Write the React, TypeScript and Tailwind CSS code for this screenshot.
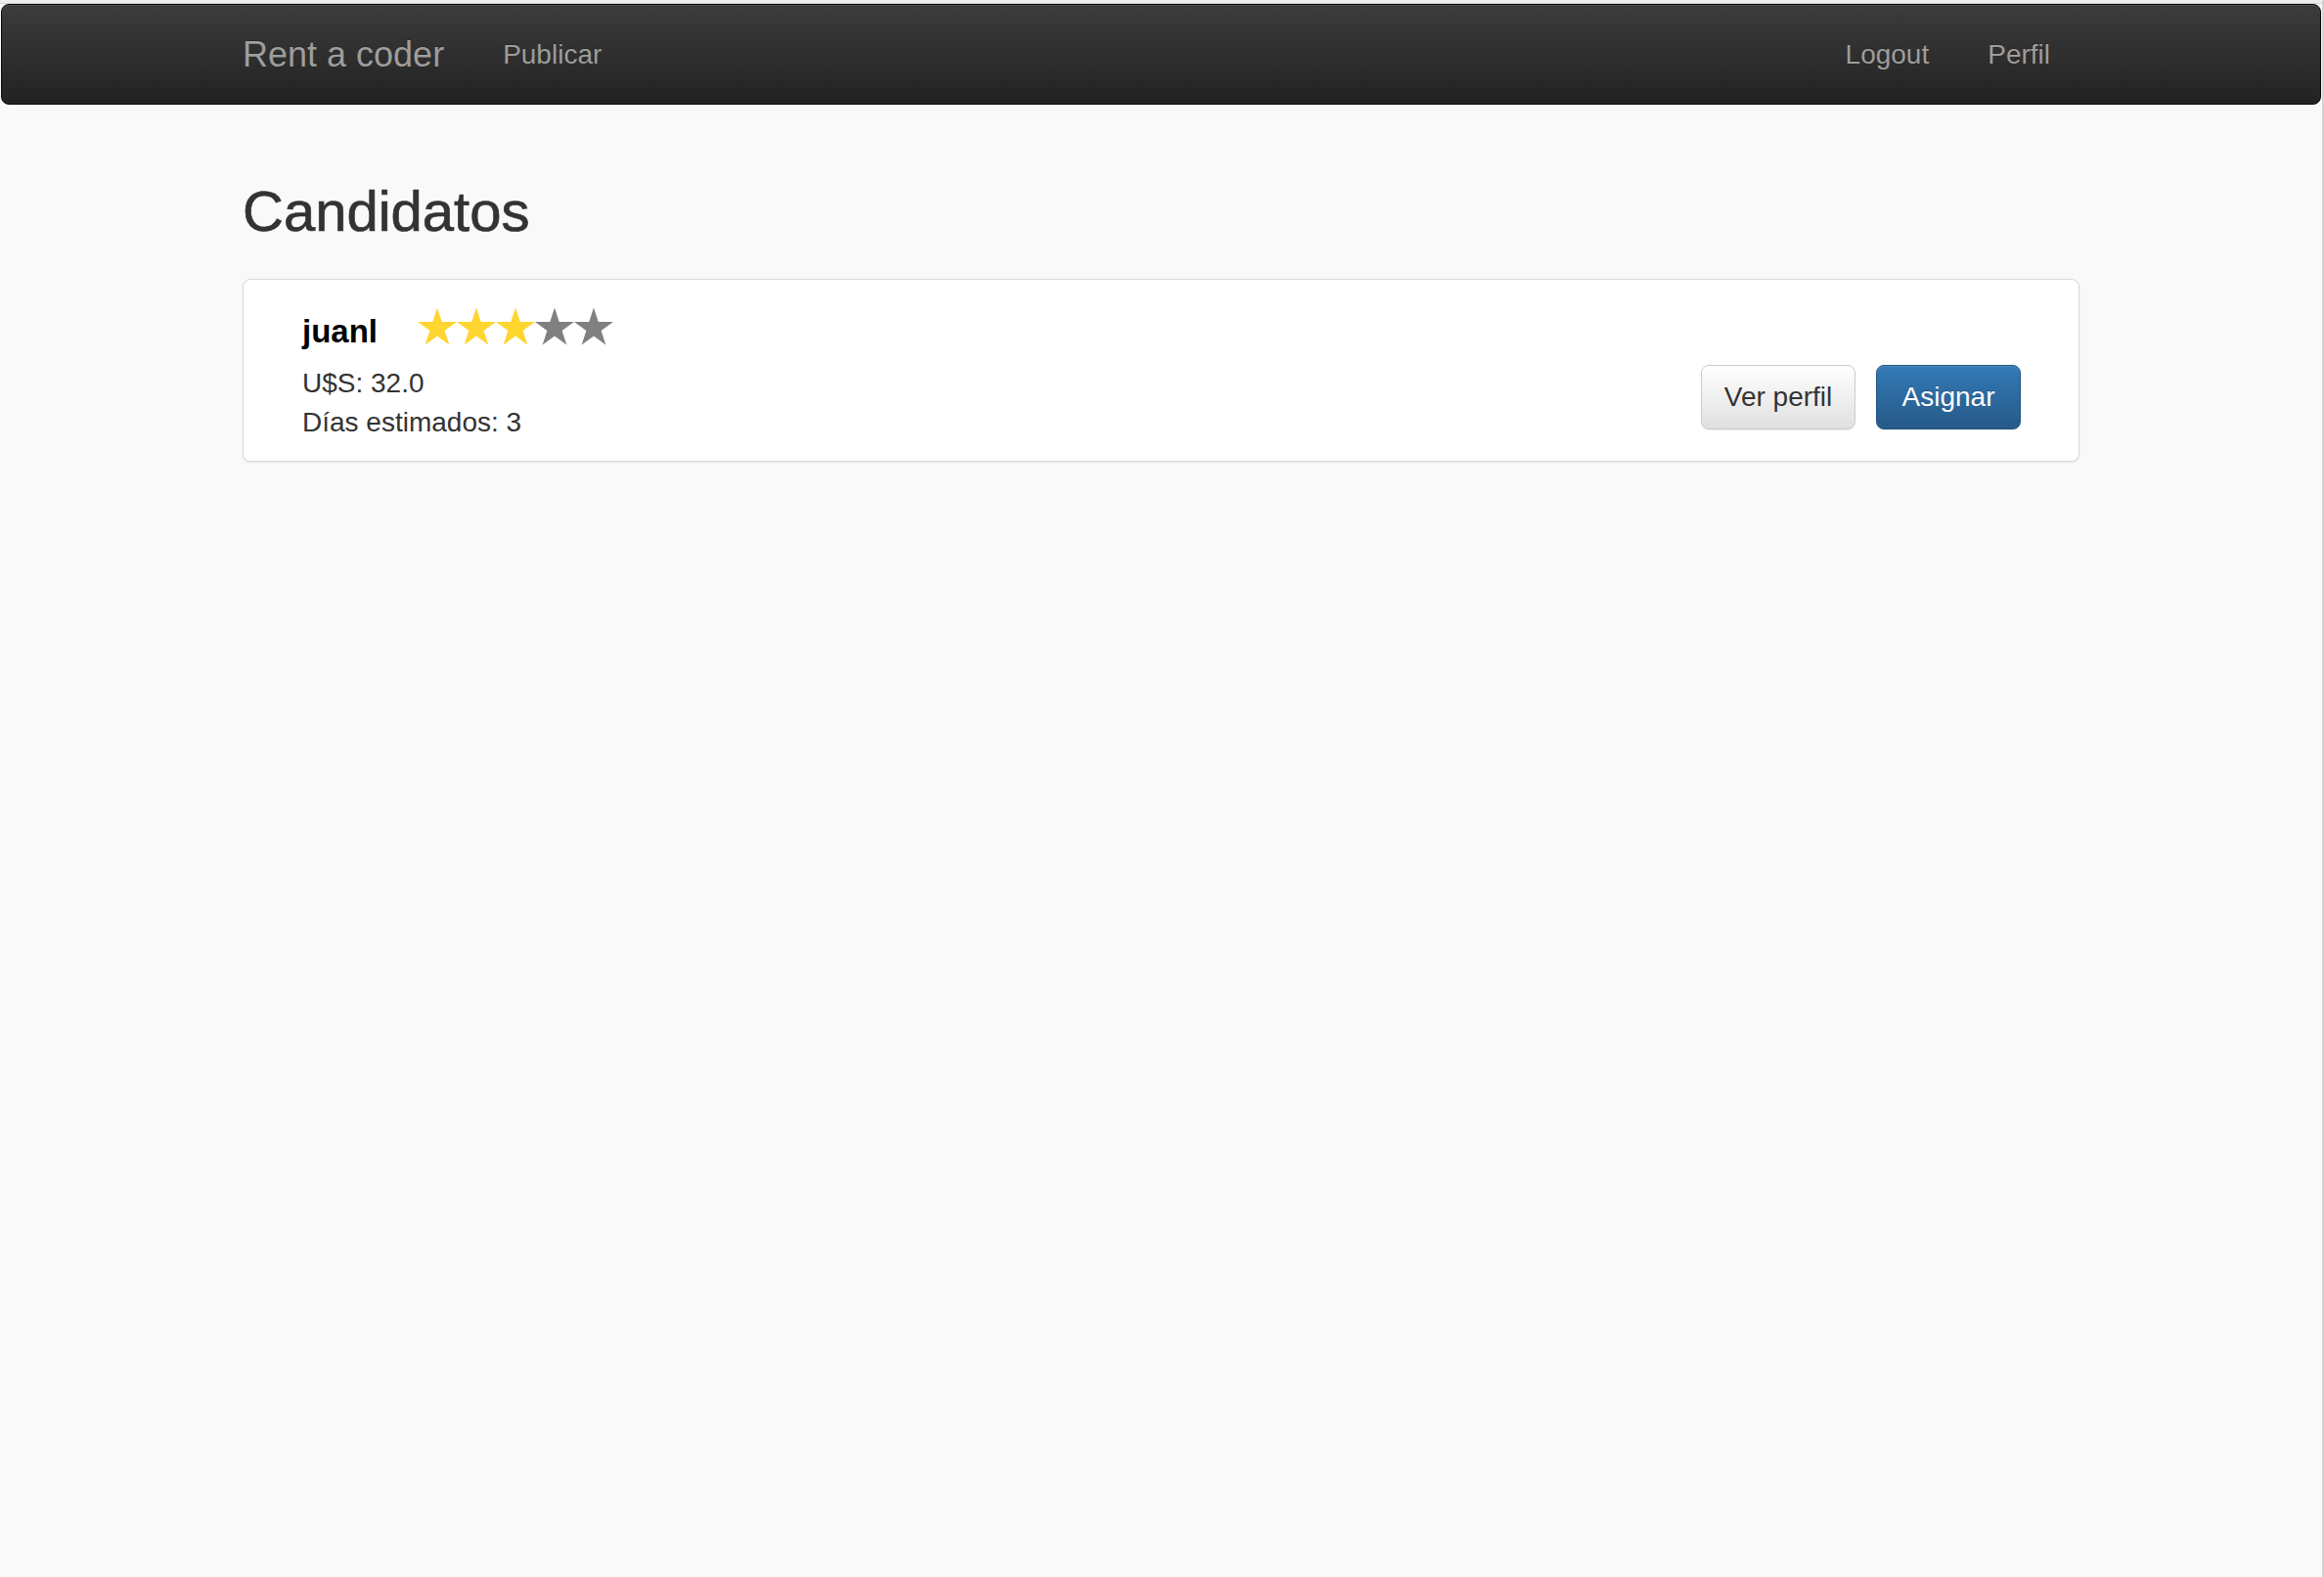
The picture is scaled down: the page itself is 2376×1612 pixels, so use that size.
import React from "react";

const font = { fontFamily: '"Liberation Sans", Arial, Helvetica, sans-serif' };

interface Candidate {
  name: string;
  rating: number;
  price: string;
  days: number;
}

const candidates: Candidate[] = [{ name: "juanl", rating: 3, price: "32.0", days: 3 }];

const STAR =
  "20,0 24.71,14.51 39.97,14.51 27.63,23.48 32.34,37.99 20,29.02 7.66,37.99 12.37,23.48 0.03,14.51 15.29,14.51";

function Stars({ value }: { value: number }) {
  return (
    <svg width="200" height="39" viewBox="0 0 200 39">
      {[0, 1, 2, 3, 4].map((i) => (
        <polygon
          key={i}
          points={STAR}
          transform={`translate(${i * 40} 0.5)`}
          fill={i < value ? "#ffd530" : "#808080"}
        />
      ))}
    </svg>
  );
}

function Navbar() {
  return (
    <nav className="ml-px mr-px h-[103px] rounded-[8px] border border-[#0a0a0a] bg-gradient-to-b from-[#3c3c3c] to-[#222222] shadow-[inset_0_1px_0_rgba(255,255,255,0.1)]">
      <div className="mx-auto flex h-full w-[1878px] items-center justify-between text-[#9d9d9d] [text-shadow:0_-1px_0_rgba(0,0,0,0.25)]">
        <div className="flex items-center">
          <a className="text-[36px] leading-[40px]">Rent a coder</a>
          <a className="ml-[60px] text-[28px] leading-[40px]">Publicar</a>
        </div>
        <div className="flex items-center gap-[60px] pr-[30px] text-[28px] leading-[40px]">
          <a>Logout</a>
          <a>Perfil</a>
        </div>
      </div>
    </nav>
  );
}

function CandidateCard({ c }: { c: Candidate }) {
  return (
    <div className="flex items-start justify-between rounded-[8px] border border-[#dadada] bg-white pl-[60px] pr-[59px] pt-[28px] pb-[19px] shadow-[0_1px_2px_rgba(0,0,0,0.08)]">
      <div>
        <div className="flex h-[58px] items-start">
          <h4 className="pt-[5px] text-[33px] font-bold leading-[40px] text-black">{c.name}</h4>
          <div className="ml-[41px]">
            <Stars value={c.rating} />
          </div>
        </div>
        <p className="text-[28px] leading-[40px] text-[#333333]">U$S: {c.price}</p>
        <p className="text-[28px] leading-[40px] text-[#333333]">Días estimados: {c.days}</p>
      </div>
      <div className="mt-[59px] flex gap-[21px]">
        <button className="flex h-[66px] w-[158px] items-center justify-center rounded-[8px] border border-[#cccccc] bg-gradient-to-b from-white to-[#e0e0e0] text-[28px] text-[#333333] shadow-[inset_0_1px_0_rgba(255,255,255,0.15),0_1px_1px_rgba(0,0,0,0.075)]">
          Ver perfil
        </button>
        <button className="flex h-[66px] w-[148px] items-center justify-center rounded-[8px] border border-[#245580] bg-gradient-to-b from-[#337ab7] to-[#265a88] text-[28px] text-white [text-shadow:0_-1px_0_rgba(0,0,0,0.2)] shadow-[inset_0_1px_0_rgba(255,255,255,0.15),0_1px_1px_rgba(0,0,0,0.075)]">
          Asignar
        </button>
      </div>
    </div>
  );
}

export default function App() {
  return (
    <div className="flex min-h-[1612px] bg-[#f9f9f9]" style={font}>
      <div className="flex-1">
        <div className="h-[4px] border-b border-[#d4d4d4] bg-[#eeeeee]" />
        <Navbar />
        <main className="mx-auto w-[1878px]">
          <h1 className="mt-[76px] text-[58px] leading-[66px] text-[#333333] [-webkit-text-stroke:0.7px_#333333]">
            Candidatos
          </h1>
          <div className="mt-[36px] space-y-[20px]">
            {candidates.map((c) => (
              <CandidateCard key={c.name} c={c} />
            ))}
          </div>
        </main>
      </div>
      <div className="w-[2px] bg-[#d2d2d2]" />
    </div>
  );
}
